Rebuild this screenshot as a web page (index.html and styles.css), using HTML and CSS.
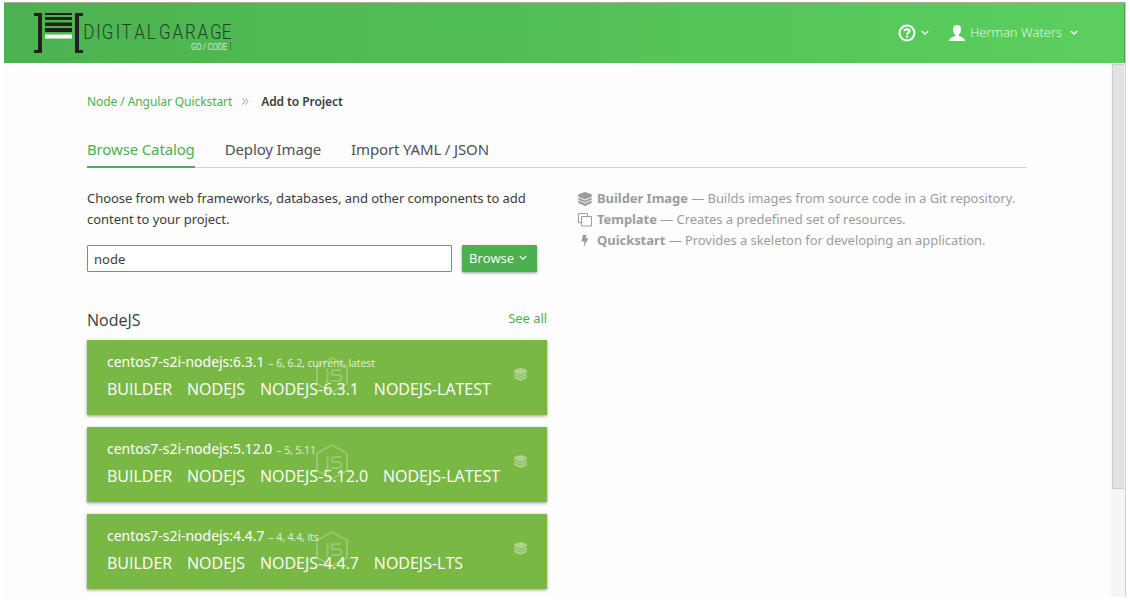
FILE: index.html
```
<!DOCTYPE html>
<html lang="en">
<head>
<meta charset="utf-8">
<title>Add to Project</title>
<link rel="stylesheet" href="styles.css">
</head>
<body>
<svg class="defs" aria-hidden="true">
  <symbol id="layers" viewBox="0 0 14 14"><path d="M7 0L13.700 2.200V4.800L7 7.600L0.300 4.800V2.200z"/><path d="M.3 5.700L7 8.600L13.700 5.700V7.700L7 10.500L.3 7.700z"/><path d="M.3 8.600L7 11.500L13.700 8.600V11L7 13.900L.3 11z"/></symbol>
  <symbol id="chev" viewBox="0 0 8 6"><path d="M.8 1L4 4.2L7.2 1" fill="none" stroke="currentColor" stroke-width="1.2"/></symbol>
  <symbol id="nodejs" viewBox="0 0 34 38"><g fill="none" stroke="currentColor" stroke-width="2"><path d="M17 2L32 10.5V27.5L17 36L2 27.5V10.5z"/><path d="M12.5 13V25.5H10.5M26 14H19.5Q16.5 14 16.5 16.5T19.5 19H23.500Q26.500 19 26.500 22T23.500 25H16"/></g></symbol>
</svg>
<div class="window">
  <header class="header">
    <svg class="logo" width="200" height="42" viewBox="0 0 200 42">
      <g fill="#231f20"><path d="M0 0H8V40H0V37H4V3H0z"/><path d="M41 0H49V3H45V37H49V40H41z"/><path d="M11 0H38V2H11zM11 4H38V7H11zM11 9.500H38V13H11zM11 15H38V19H11z"/></g>
      <path d="M11 21.500H38V25.500H11z" fill="#fff"/>
      <text class="logo-name" transform="translate(50 26) scale(.85 1)" x="-1 14.5 21 37.5 44.2 59.2 73.7 88.2 104.2 118.7 133.4 148.2 162.2" y="0">DIGITALGARAGE</text>
      <text class="logo-sub" x="157" y="37" textLength="36" lengthAdjust="spacingAndGlyphs">GO / CODE</text>
      <path d="M196.500 29V37" stroke="#36893a"/>
    </svg>
    <nav class="utilities">
      <svg class="help-icon" width="18" height="18" viewBox="0 0 18 18" fill="none" stroke="#fff" stroke-width="2"><circle cx="9" cy="9" r="7.500"/><path d="M6.300 7Q6.600 5.300 9 5.300Q11.500 5.300 11.500 7.100C11.500 8.600 9.100 8.700 9.100 10.600M9.100 11.700V13.600"/></svg>
      <svg class="chev" width="8" height="6"><use href="#chev"/></svg>
      <svg class="user-icon" width="16" height="16" viewBox="0 0 16 16" fill="#fff"><path d="M4 4Q4 0 8 0T12 4C12 7 11 8.500 10 9.500V11C12 12 15.500 12.500 16 16H0C.5 12.500 4 12 6 11V9.500C5 8.500 4 7 4 4z"/></svg>
      <span class="user">Herman Waters</span>
      <svg class="chev" width="8" height="6"><use href="#chev"/></svg>
    </nav>
  </header>
  <div class="body">
    <main class="content">
      <div class="crumbs"><a class="crumb-link">Node / Angular Quickstart</a><svg class="sep" width="7" height="7" viewBox="0 0 7 7" fill="none" stroke="#999"><path d="M.5 .5L3 3.500L.5 6.500M3.500 .5L6 3.500L3.500 6.500"/></svg><strong class="crumb-here">Add to Project</strong></div>
      <div class="tabs"><a class="tab active">Browse Catalog</a><a class="tab">Deploy Image</a><a class="tab">Import YAML / JSON</a></div>
      <div class="columns">
        <section class="left">
          <p class="intro">Choose from web frameworks, databases, and other components to add content to your project.</p>
          <div class="search"><input class="field" value="node"><button class="browse">Browse<svg width="8" height="6"><use href="#chev"/></svg></button></div>
          <div class="section-head"><h2 class="section-title">NodeJS</h2><a class="see-all">See all</a></div>
          <div class="cards">
            <article class="card"><svg class="mark"><use href="#nodejs"/></svg><div class="title"><span class="name">centos7-s2i-nodejs:6.3.1</span><span class="versions">– 6, 6.2, current, latest</span></div><div class="tags"><span>BUILDER</span><span>NODEJS</span><span>NODEJS-6.3.1</span><span>NODEJS-LATEST</span></div><svg class="kind"><use href="#layers"/></svg></article>
            <article class="card"><svg class="mark"><use href="#nodejs"/></svg><div class="title"><span class="name">centos7-s2i-nodejs:5.12.0</span><span class="versions">– 5, 5.11</span></div><div class="tags"><span>BUILDER</span><span>NODEJS</span><span>NODEJS-5.12.0</span><span>NODEJS-LATEST</span></div><svg class="kind"><use href="#layers"/></svg></article>
            <article class="card"><svg class="mark"><use href="#nodejs"/></svg><div class="title"><span class="name">centos7-s2i-nodejs:4.4.7</span><span class="versions">– 4, 4.4, lts</span></div><div class="tags"><span>BUILDER</span><span>NODEJS</span><span>NODEJS-4.4.7</span><span>NODEJS-LTS</span></div><svg class="kind"><use href="#layers"/></svg></article>
          </div>
        </section>
        <aside class="legend">
          <div class="legend-row"><svg width="14" height="14" fill="currentColor"><use href="#layers"/></svg><span><b>Builder Image</b> — Builds images from source code in a Git repository.</span></div>
          <div class="legend-row"><svg width="14" height="14" viewBox="0 0 14 14" fill="none" stroke="currentColor"><path d="M3.500 9.500H.5V.5H9.500V3.500M3.500 3.500H13.500V13H3.500z"/></svg><span><b>Template</b> — Creates a predefined set of resources.</span></div>
          <div class="legend-row"><svg width="14" height="14" viewBox="0 0 14 14" fill="currentColor"><path d="M5 1H8.500L7.700 4.500L10.500 4L5.800 13L6.500 7.200L3.500 7.800z"/></svg><span><b>Quickstart</b> — Provides a skeleton for developing an application.</span></div>
        </aside>
      </div>
    </main>
    <div class="scrollbar"><div class="thumb"></div></div>
  </div>
</div>
</body>
</html>
```
FILE: styles.css
```
* { box-sizing: border-box; }
body { margin: 0; width: 1130px; height: 600px; overflow: hidden; background: #fff; font-family: "Noto Sans", sans-serif; color: #3c3c3c; }
.defs { display: none; }
.window { margin: 2px 4px 0; width: 1122px; height: 595px; border-top: 1px solid #aaa; border-right: 1px solid #ccc; background: #fdfdfd; display: flex; flex-direction: column; overflow: hidden; }
.header { height: 60px; flex: none; display: flex; justify-content: space-between; align-items: flex-start; padding: 10px 46px 0 30px; background: linear-gradient(90deg, #4bb24f, #5bcf5f); border-right: 1px solid #48a64c; }
.logo { display: block; flex: none; overflow: visible; }
.logo-name { font: 300 20px Roboto, sans-serif; fill: #23402a; }
.logo-sub { font: 300 9px Roboto, sans-serif; fill: #fff; }
.utilities { display: flex; align-items: center; height: 40px; color: #fff; }
.help-icon { margin-right: 5px; }
.user-icon { margin: 0 5px 0 20px; }
.user { font: 300 13px/20px "Open Sans", sans-serif; color: #eefbee; margin-right: 8px; position: relative; top: -1px; }
.body { display: flex; flex: 1; min-height: 0; }
.content { width: 1107px; padding: 28px 0 0 83px; }
.scrollbar { width: 14px; background: #f5f5f5; padding: 1px 1px 0; }
.thumb { height: 425px; background: #e2e2e2; border: 1px solid #ccc; border-right: 0; }
.crumbs { display: flex; align-items: center; height: 21px; font-size: 12px; letter-spacing: -.08px; }
.crumb-link, .see-all { color: #4caf50; }
.sep { margin: 0 12px 0 10px; }
.crumb-here { font-weight: 600; }
.tabs { display: flex; width: 940px; height: 29px; margin-top: 27px; border-bottom: 1px solid #d1d1d1; font-size: 15px; line-height: 21px; gap: 30px; color: #4d5258; letter-spacing: -.14px; }
.tab { height: 29px; }
.active { color: #4caf50; border-bottom: 2px solid #4caf50; }
.columns { display: flex; gap: 31px; padding-top: 20px; }
.left { width: 460px; }
.intro { margin: 0; font-size: 13px; line-height: 21px; letter-spacing: -.05px; }
.search { display: flex; gap: 10px; margin-top: 15px; }
.field { width: 365px; height: 27px; border: 1px solid #4caf50; border-radius: 1px; padding: 1px 6px; font: 13px "Noto Sans", sans-serif; color: #3c3c3c; background: #fff; }
.browse { width: 75px; height: 27px; border: 0; border-radius: 1px; background: #4caf50; color: #fff; font: 13px "Open Sans", sans-serif; box-shadow: 0 1px 3px rgba(0,0,0,.4); display: flex; align-items: center; gap: 5px; padding: 0 7px 1px; }
.section-head { display: flex; justify-content: space-between; height: 68px; padding-top: 36px; }
.section-title { margin: 0; font: 400 16px/24px "Open Sans", sans-serif; }
.see-all { font-size: 13px; line-height: 21px; letter-spacing: -.06px; }
.cards { display: flex; flex-direction: column; gap: 12px; }
.card { position: relative; height: 75px; padding: 11px 20px; background: #7ab845; color: #fff; box-shadow: 0 1px 3px rgba(0,0,0,.4); }
.title { height: 20px; line-height: 20px; white-space: nowrap; }
.name { font-size: 14px; margin-right: 4px; letter-spacing: -.03px; }
.versions { font: 10.5px "Open Sans", sans-serif; letter-spacing: -.06px; opacity: .8; }
.tags { display: flex; gap: 14.85px; font: 16px/24px "Open Sans", sans-serif; margin-top: 6px; white-space: nowrap; }
.mark { position: absolute; left: 228px; top: 16px; width: 34px; height: 38px; opacity: .22; }
.kind { position: absolute; right: 20px; top: 28px; width: 13px; height: 13px; fill: currentColor; opacity: .4; }
.legend { color: #9c9c9c; font-size: 13px; line-height: 21px; letter-spacing: -.05px; white-space: nowrap; }
.legend-row { display: flex; align-items: center; gap: 5px; height: 21px; }
```
